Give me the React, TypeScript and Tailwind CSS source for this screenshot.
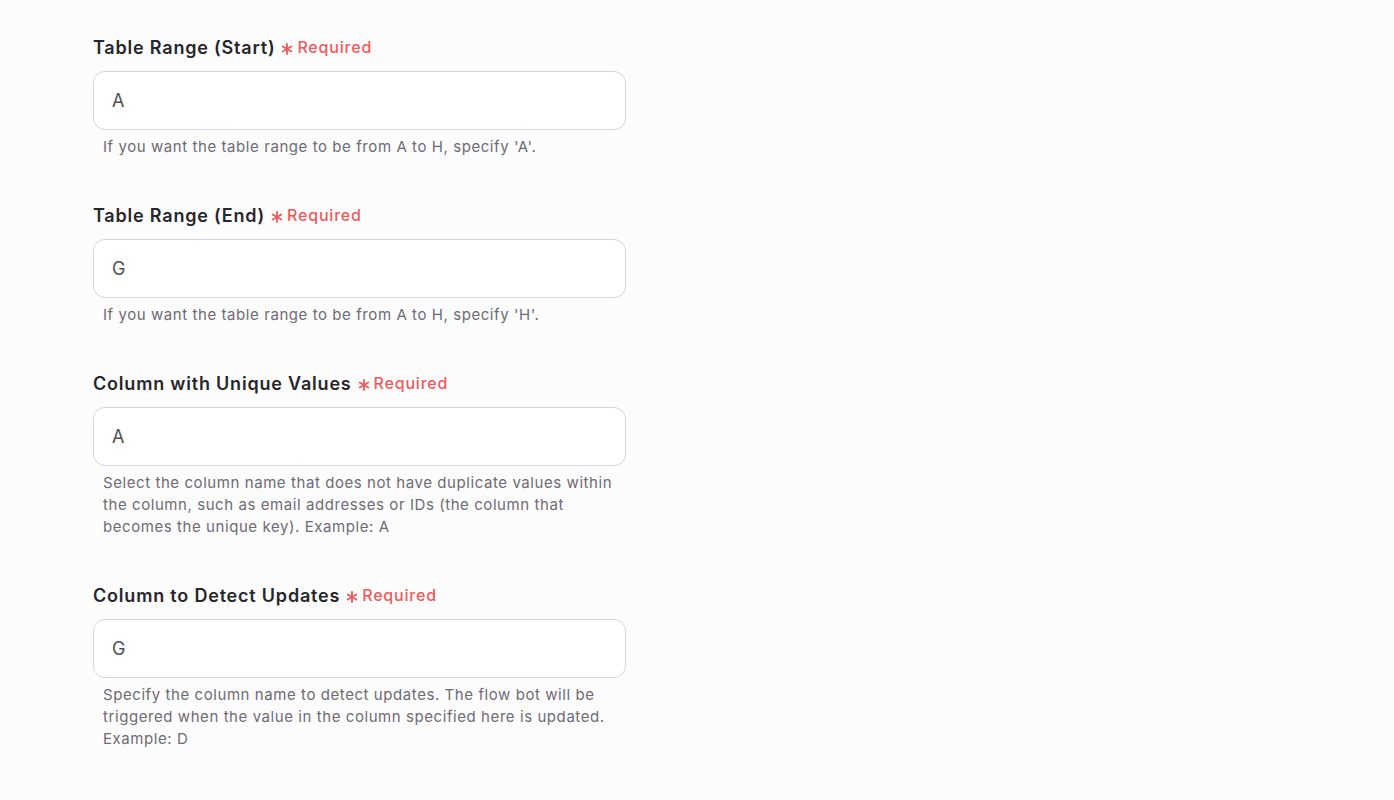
import React from 'react';

const fields = [
  {
    label: 'Table Range (Start)',
    value: 'A',
    help: "If you want the table range to be from A to H, specify 'A'.",
  },
  {
    label: 'Table Range (End)',
    value: 'G',
    help: "If you want the table range to be from A to H, specify 'H'.",
  },
  {
    label: 'Column with Unique Values',
    value: 'A',
    help: 'Select the column name that does not have duplicate values within the column, such as email addresses or IDs (the column that becomes the unique key). Example: A',
  },
  {
    label: 'Column to Detect Updates',
    value: 'G',
    help: 'Specify the column name to detect updates. The flow bot will be triggered when the value in the column specified here is updated. Example: D',
  },
];

function Asterisk() {
  return (
    <svg width="12" height="12" viewBox="0 0 12 12" className="mt-[3px]" fill="none" stroke="#f05a5a" strokeWidth="1.8" strokeLinecap="round">
      <path d="M6 1v10" />
      <path d="M1.7 3.5l8.6 5" />
      <path d="M1.7 8.5l8.6-5" />
    </svg>
  );
}

export default function App() {
  return (
    <div className="min-h-screen w-full bg-[#fdfcfd] pt-[35px] pl-[93px]" style={{ fontFamily: 'Inter, "Noto Sans", sans-serif' }}>
      <div className="flex w-[533px] flex-col gap-[45px]">
        {fields.map((f) => (
          <div key={f.label} className="flex flex-col">
            <div className="flex h-6 items-center gap-[6px] tracking-[0.05em]">
              <span className="text-[18px] font-semibold text-[#27272b]">{f.label}</span>
              <Asterisk />
              <span className="-ml-[2px] text-[16px] font-medium text-[#f05a5a]">Required</span>
            </div>
            <div className="mt-3 flex h-[59px] items-center rounded-xl border border-[#d6d4da] bg-white px-[18px] text-[18px] tracking-[0.04em] text-[#505057]">
              {f.value}
            </div>
            <p className="mt-[6px] pl-[10px] pr-[5px] text-[15px] leading-[22px] tracking-[0.038em] text-[#6d6b73]">
              {f.help}
            </p>
          </div>
        ))}
      </div>
    </div>
  );
}
